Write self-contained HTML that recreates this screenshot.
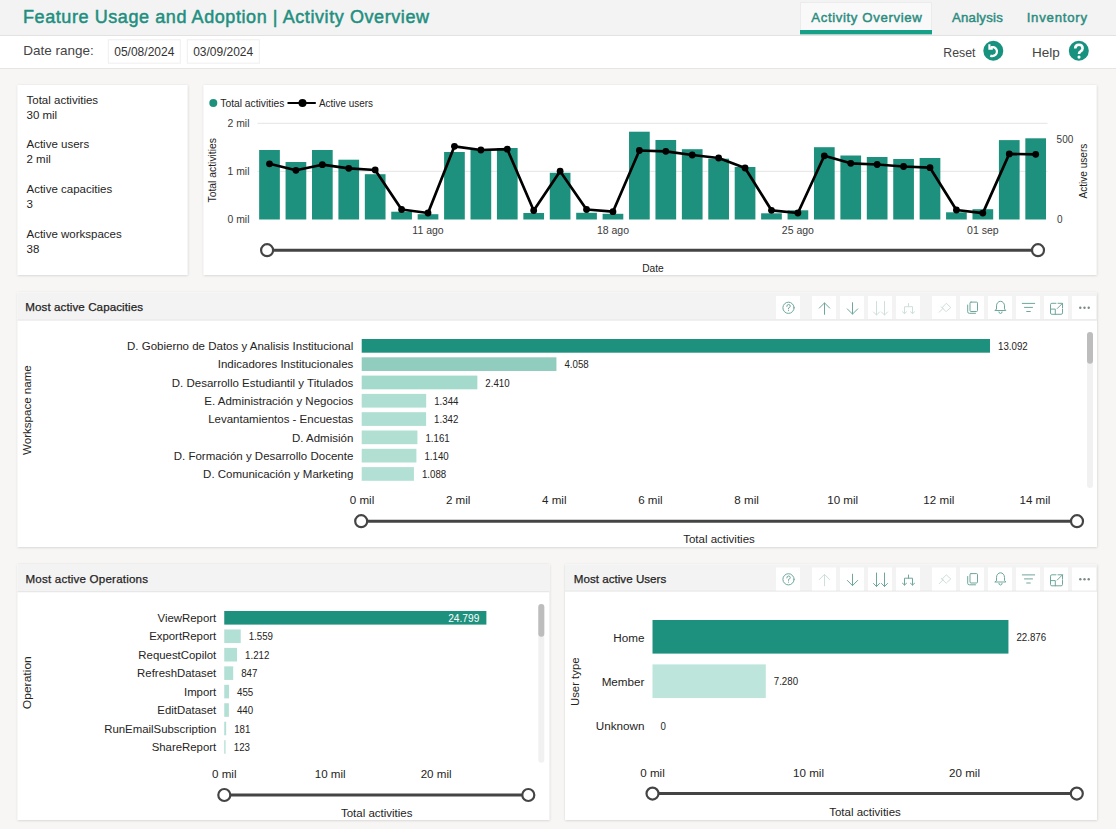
<!DOCTYPE html>
<html><head><meta charset="utf-8"><title>Feature Usage and Adoption | Activity Overview</title>
<style>
html,body{margin:0;padding:0;width:1116px;height:829px;overflow:hidden;background:#f6f5f4;}
svg{display:block;font-family:"Liberation Sans", sans-serif;}
</style></head>
<body>
<svg width="1116" height="829" viewBox="0 0 1116 829">
<defs><filter id="sh" x="-5%" y="-5%" width="110%" height="110%"><feDropShadow dx="0.3" dy="0.6" stdDeviation="1.1" flood-color="#000" flood-opacity="0.16"/></filter></defs>
<rect x="0" y="0" width="1116" height="35" fill="#f3f3f3"/>
<rect x="0" y="35" width="1116" height="1" fill="#e3e2e1"/>
<rect x="0" y="36" width="1116" height="32" fill="#ffffff"/>
<rect x="0" y="68" width="1116" height="1" fill="#e6e5e4"/>
<text x="23.00" y="22.50" font-size="18" text-anchor="start" fill="#1f8f80" stroke="#1f8f80" stroke-width="0.5" textLength="406" lengthAdjust="spacing">Feature Usage and Adoption | Activity Overview</text>
<rect x="800.5" y="2.5" width="131" height="32" fill="#f9f9f9" stroke="#ebebeb" stroke-width="1"/>
<rect x="800" y="30" width="132" height="4.3" fill="#17a089"/>
<text x="811.30" y="22.00" font-size="13.2" text-anchor="start" fill="#2b8c80" stroke="#2b8c80" stroke-width="0.45" textLength="110.4" lengthAdjust="spacing">Activity Overview</text>
<text x="952.00" y="22.00" font-size="13.2" text-anchor="start" fill="#2b8c80" stroke="#2b8c80" stroke-width="0.45" textLength="50.8" lengthAdjust="spacing">Analysis</text>
<text x="1026.70" y="22.00" font-size="13.2" text-anchor="start" fill="#2b8c80" stroke="#2b8c80" stroke-width="0.45" textLength="60.3" lengthAdjust="spacing">Inventory</text>
<text x="23.30" y="54.80" font-size="13.5" text-anchor="start" fill="#444444" font-weight="normal" >Date range:</text>
<rect x="108.3" y="39.8" width="72" height="23.4" fill="#fff" stroke="#efefef" stroke-width="1"/>
<rect x="187.3" y="39.8" width="72" height="23.4" fill="#fff" stroke="#efefef" stroke-width="1"/>
<text x="144.30" y="55.60" font-size="12" text-anchor="middle" fill="#333333" font-weight="normal" >05/08/2024</text>
<text x="223.20" y="55.60" font-size="12" text-anchor="middle" fill="#333333" font-weight="normal" >03/09/2024</text>
<text x="943.30" y="56.70" font-size="12.3" text-anchor="start" fill="#444444" font-weight="normal" >Reset</text>
<text x="1032.00" y="56.70" font-size="13.5" text-anchor="start" fill="#444444" font-weight="normal" >Help</text>
<circle cx="993.3" cy="50.8" r="10" fill="#17927f"/>
<path d="M990.5 47.2 H993.6 A4.7 4.5 0 1 1 990.3 55.6" fill="none" stroke="#fff" stroke-width="2.3"/>
<path d="M989.4 44.3 V48.6 H992.8" fill="none" stroke="#fff" stroke-width="2.1"/>
<circle cx="1078.8" cy="50.8" r="10" fill="#17927f"/>
<path d="M1075.2 48.6 Q1075.2 44.8 1078.9 44.8 Q1082.6 44.8 1082.6 48.2 Q1082.6 50.2 1080.6 51.3 Q1079 52.2 1079 54" fill="none" stroke="#fff" stroke-width="2.6"/>
<circle cx="1079" cy="57.1" r="1.55" fill="#fff"/>
<rect x="0" y="69" width="1116" height="760" fill="#f7f6f5"/>
<rect x="17.5" y="85" width="170.0" height="190" fill="#ffffff" filter="url(#sh)"/>
<rect x="203.5" y="85" width="893.0" height="190" fill="#ffffff" filter="url(#sh)"/>
<rect x="17.5" y="292.5" width="1079.5" height="254.5" fill="#ffffff" filter="url(#sh)"/>
<rect x="17.5" y="564" width="531.8" height="256" fill="#ffffff" filter="url(#sh)"/>
<rect x="565" y="564.5" width="532" height="255.5" fill="#ffffff" filter="url(#sh)"/>
<text x="26.50" y="103.70" font-size="11.5" text-anchor="start" fill="#252423" font-weight="normal" >Total activities</text>
<text x="26.50" y="118.70" font-size="11.5" text-anchor="start" fill="#252423" font-weight="normal" >30 mil</text>
<text x="26.50" y="148.30" font-size="11.5" text-anchor="start" fill="#252423" font-weight="normal" >Active users</text>
<text x="26.50" y="163.30" font-size="11.5" text-anchor="start" fill="#252423" font-weight="normal" >2 mil</text>
<text x="26.50" y="192.90" font-size="11.5" text-anchor="start" fill="#252423" font-weight="normal" >Active capacities</text>
<text x="26.50" y="207.90" font-size="11.5" text-anchor="start" fill="#252423" font-weight="normal" >3</text>
<text x="26.50" y="237.50" font-size="11.5" text-anchor="start" fill="#252423" font-weight="normal" >Active workspaces</text>
<text x="26.50" y="252.50" font-size="11.5" text-anchor="start" fill="#252423" font-weight="normal" >38</text>
<circle cx="213.3" cy="103" r="4" fill="#1e917e"/>
<text x="220.30" y="106.70" font-size="10.5" text-anchor="start" fill="#252423" font-weight="normal" textLength="64" lengthAdjust="spacingAndGlyphs">Total activities</text>
<line x1="287.5" y1="103" x2="315.8" y2="103" stroke="#000" stroke-width="2"/>
<circle cx="302.5" cy="103" r="4" fill="#000"/>
<text x="319.00" y="106.70" font-size="10.3" text-anchor="start" fill="#252423" font-weight="normal" textLength="54" lengthAdjust="spacingAndGlyphs">Active users</text>
<rect x="257.5" y="122.8" width="790" height="1" fill="#e4e4e4"/>
<rect x="257.5" y="170.8" width="790" height="1" fill="#e4e4e4"/>
<text x="249.50" y="126.70" font-size="10.4" text-anchor="end" fill="#3a3a3a" font-weight="normal" >2 mil</text>
<text x="249.50" y="174.70" font-size="10.4" text-anchor="end" fill="#3a3a3a" font-weight="normal" >1 mil</text>
<text x="249.50" y="222.70" font-size="10.4" text-anchor="end" fill="#3a3a3a" font-weight="normal" >0 mil</text>
<text x="0.00" y="0.00" font-size="10.5" text-anchor="middle" fill="#252423" font-weight="normal" textLength="64.5" lengthAdjust="spacingAndGlyphs" transform="translate(216.3,170.25) rotate(-90)">Total activities</text>
<text x="0.00" y="0.00" font-size="10.5" text-anchor="middle" fill="#252423" font-weight="normal" textLength="54.7" lengthAdjust="spacingAndGlyphs" transform="translate(1087,171.1) rotate(-90)">Active users</text>
<text x="1056.60" y="143.00" font-size="10" text-anchor="start" fill="#3a3a3a" font-weight="normal" >500</text>
<text x="1057.00" y="222.50" font-size="10" text-anchor="start" fill="#3a3a3a" font-weight="normal" >0</text>
<rect x="259.15" y="150" width="20.7" height="69.50" fill="#1e917e"/>
<rect x="285.57" y="162" width="20.7" height="57.50" fill="#1e917e"/>
<rect x="311.99" y="150" width="20.7" height="69.50" fill="#1e917e"/>
<rect x="338.41" y="159.7" width="20.7" height="59.80" fill="#1e917e"/>
<rect x="364.83" y="174.2" width="20.7" height="45.30" fill="#1e917e"/>
<rect x="391.25" y="211.7" width="20.7" height="7.80" fill="#1e917e"/>
<rect x="417.67" y="214.2" width="20.7" height="5.30" fill="#1e917e"/>
<rect x="444.09" y="152" width="20.7" height="67.50" fill="#1e917e"/>
<rect x="470.51" y="150" width="20.7" height="69.50" fill="#1e917e"/>
<rect x="496.93" y="148" width="20.7" height="71.50" fill="#1e917e"/>
<rect x="523.35" y="213" width="20.7" height="6.50" fill="#1e917e"/>
<rect x="549.77" y="172.8" width="20.7" height="46.70" fill="#1e917e"/>
<rect x="576.19" y="212.8" width="20.7" height="6.70" fill="#1e917e"/>
<rect x="602.61" y="213.8" width="20.7" height="5.70" fill="#1e917e"/>
<rect x="629.03" y="131.7" width="20.7" height="87.80" fill="#1e917e"/>
<rect x="655.45" y="140" width="20.7" height="79.50" fill="#1e917e"/>
<rect x="681.87" y="149.2" width="20.7" height="70.30" fill="#1e917e"/>
<rect x="708.29" y="158.7" width="20.7" height="60.80" fill="#1e917e"/>
<rect x="734.71" y="167" width="20.7" height="52.50" fill="#1e917e"/>
<rect x="761.13" y="213.3" width="20.7" height="6.20" fill="#1e917e"/>
<rect x="787.55" y="210.3" width="20.7" height="9.20" fill="#1e917e"/>
<rect x="813.97" y="147.2" width="20.7" height="72.30" fill="#1e917e"/>
<rect x="840.39" y="155.5" width="20.7" height="64.00" fill="#1e917e"/>
<rect x="866.81" y="157" width="20.7" height="62.50" fill="#1e917e"/>
<rect x="893.23" y="159" width="20.7" height="60.50" fill="#1e917e"/>
<rect x="919.65" y="158" width="20.7" height="61.50" fill="#1e917e"/>
<rect x="946.07" y="212.3" width="20.7" height="7.20" fill="#1e917e"/>
<rect x="972.49" y="209.2" width="20.7" height="10.30" fill="#1e917e"/>
<rect x="998.91" y="140.1" width="20.7" height="79.40" fill="#1e917e"/>
<rect x="1025.33" y="138.3" width="20.7" height="81.20" fill="#1e917e"/>
<polyline points="269.50,163.8 295.92,170.3 322.34,164.7 348.76,168.3 375.18,170 401.60,209.5 428.02,213 454.44,146.3 480.86,150 507.28,149.2 533.70,210.5 560.12,171.2 586.54,209.5 612.96,211.7 639.38,150.5 665.80,151.3 692.22,155 718.64,158 745.06,168 771.48,210.3 797.90,213 824.32,155.8 850.74,163.3 877.16,164.5 903.58,166.5 930.00,167.7 956.42,210 982.84,213.1 1009.26,153.9 1035.68,154.3" fill="none" stroke="#000" stroke-width="2.7" stroke-linejoin="round"/>
<circle cx="269.50" cy="163.8" r="3.4" fill="#000"/>
<circle cx="295.92" cy="170.3" r="3.4" fill="#000"/>
<circle cx="322.34" cy="164.7" r="3.4" fill="#000"/>
<circle cx="348.76" cy="168.3" r="3.4" fill="#000"/>
<circle cx="375.18" cy="170" r="3.4" fill="#000"/>
<circle cx="401.60" cy="209.5" r="3.4" fill="#000"/>
<circle cx="428.02" cy="213" r="3.4" fill="#000"/>
<circle cx="454.44" cy="146.3" r="3.4" fill="#000"/>
<circle cx="480.86" cy="150" r="3.4" fill="#000"/>
<circle cx="507.28" cy="149.2" r="3.4" fill="#000"/>
<circle cx="533.70" cy="210.5" r="3.4" fill="#000"/>
<circle cx="560.12" cy="171.2" r="3.4" fill="#000"/>
<circle cx="586.54" cy="209.5" r="3.4" fill="#000"/>
<circle cx="612.96" cy="211.7" r="3.4" fill="#000"/>
<circle cx="639.38" cy="150.5" r="3.4" fill="#000"/>
<circle cx="665.80" cy="151.3" r="3.4" fill="#000"/>
<circle cx="692.22" cy="155" r="3.4" fill="#000"/>
<circle cx="718.64" cy="158" r="3.4" fill="#000"/>
<circle cx="745.06" cy="168" r="3.4" fill="#000"/>
<circle cx="771.48" cy="210.3" r="3.4" fill="#000"/>
<circle cx="797.90" cy="213" r="3.4" fill="#000"/>
<circle cx="824.32" cy="155.8" r="3.4" fill="#000"/>
<circle cx="850.74" cy="163.3" r="3.4" fill="#000"/>
<circle cx="877.16" cy="164.5" r="3.4" fill="#000"/>
<circle cx="903.58" cy="166.5" r="3.4" fill="#000"/>
<circle cx="930.00" cy="167.7" r="3.4" fill="#000"/>
<circle cx="956.42" cy="210" r="3.4" fill="#000"/>
<circle cx="982.84" cy="213.1" r="3.4" fill="#000"/>
<circle cx="1009.26" cy="153.9" r="3.4" fill="#000"/>
<circle cx="1035.68" cy="154.3" r="3.4" fill="#000"/>
<text x="428.02" y="233.70" font-size="10.5" text-anchor="middle" fill="#3a3a3a" font-weight="normal" >11 ago</text>
<text x="612.96" y="233.70" font-size="10.5" text-anchor="middle" fill="#3a3a3a" font-weight="normal" >18 ago</text>
<text x="797.90" y="233.70" font-size="10.5" text-anchor="middle" fill="#3a3a3a" font-weight="normal" >25 ago</text>
<text x="982.84" y="233.70" font-size="10.5" text-anchor="middle" fill="#3a3a3a" font-weight="normal" >01 sep</text>
<line x1="267.1" y1="250.2" x2="1038" y2="250.2" stroke="#444" stroke-width="3"/>
<circle cx="267.1" cy="250.2" r="6" fill="#fff" stroke="#444" stroke-width="2.2"/>
<circle cx="1038" cy="250.2" r="6" fill="#fff" stroke="#444" stroke-width="2.2"/>
<text x="653.00" y="271.80" font-size="10.2" text-anchor="middle" fill="#252423" font-weight="normal" >Date</text>
<rect x="17.5" y="292.5" width="1079.5" height="27.0" fill="#f3f3f3"/>
<rect x="17.5" y="319.5" width="1079.5" height="1" fill="#e1e1e1"/>
<text x="25.30" y="310.80" font-size="11.6" text-anchor="start" fill="#252423" stroke="#252423" stroke-width="0.25" textLength="117.7" lengthAdjust="spacing">Most active Capacities</text>
<rect x="17.5" y="564" width="531.8" height="27.200000000000045" fill="#f3f3f3"/>
<rect x="17.5" y="591.2" width="531.8" height="1" fill="#e1e1e1"/>
<text x="25.50" y="583.20" font-size="11.6" text-anchor="start" fill="#252423" stroke="#252423" stroke-width="0.25" textLength="122.5" lengthAdjust="spacing">Most active Operations</text>
<rect x="565" y="564.5" width="532" height="26.0" fill="#f3f3f3"/>
<rect x="565" y="590.5" width="532" height="1" fill="#e1e1e1"/>
<text x="573.75" y="583.00" font-size="11.6" text-anchor="start" fill="#252423" stroke="#252423" stroke-width="0.25" textLength="92.5" lengthAdjust="spacing">Most active Users</text>
<rect x="776" y="296" width="24" height="23" fill="#ffffff"/>
<circle cx="788.5" cy="307.8" r="5.6" fill="none" stroke="#6ea79b" stroke-width="1" stroke-linecap="round" stroke-linejoin="round"/>
<path d="M786.8 306.4 Q786.8 304.5 788.5 304.5 Q790.3 304.5 790.3 306.2 Q790.3 307.3 788.5 308 V308.9" fill="none" stroke="#6ea79b" stroke-width="1" stroke-linecap="round" stroke-linejoin="round"/>
<circle cx="788.5" cy="310.6" r="0.6" fill="#6ea79b"/>
<rect x="812" y="296" width="24" height="23" fill="#ffffff"/>
<path d="M824.5 314.3 V302.9 M819.3 308.1 L824.5 302.9 L829.7 308.1" fill="none" stroke="#6ea79b" stroke-width="1" stroke-linecap="round" stroke-linejoin="round"/>
<rect x="840" y="296" width="24" height="23" fill="#ffffff"/>
<path d="M852.5 302.7 V314.1 M847.3 308.9 L852.5 314.1 L857.7 308.9" fill="none" stroke="#6ea79b" stroke-width="1" stroke-linecap="round" stroke-linejoin="round"/>
<rect x="868" y="296" width="24" height="23" fill="#ffffff"/>
<path d="M876.5 301.5 V315.0 M873.5 312.0 L876.5 315.0 L879.5 312.0" fill="none" stroke="#cde0db" stroke-width="1" stroke-linecap="round" stroke-linejoin="round"/>
<path d="M884.5 301.5 V315.0 M881.5 312.0 L884.5 315.0 L887.5 312.0" fill="none" stroke="#cde0db" stroke-width="1" stroke-linecap="round" stroke-linejoin="round"/>
<rect x="896" y="296" width="24" height="23" fill="#ffffff"/>
<path d="M908.5 303.5 V306.7 M904.5 313.5 V306.7 H912.5 V313.5 M902.5 311.8 L904.5 313.5 L906.5 311.8 M910.5 311.8 L912.5 313.5 L914.5 311.8" fill="none" stroke="#cde0db" stroke-width="1" stroke-linecap="round" stroke-linejoin="round"/>
<rect x="932" y="296" width="24" height="23" fill="#ffffff"/>
<path d="M939.2 312.2 L943.0 308.4 M941.3 306.9 L946.1 311.7 M942.1 307.7 L946.3 303.3 L950.8 307.5 L946.9 310.9" fill="none" stroke="#cde0db" stroke-width="1" stroke-linecap="round" stroke-linejoin="round"/>
<rect x="960" y="296" width="24" height="23" fill="#ffffff"/>
<rect x="970.0" y="302.1" width="7.5" height="9.4" rx="1" fill="none" stroke="#6ea79b" stroke-width="1" stroke-linecap="round" stroke-linejoin="round"/>
<path d="M967.7 305.0 V311.8 Q967.7 313.3 969.3 313.3 H975.5" fill="none" stroke="#6ea79b" stroke-width="1" stroke-linecap="round" stroke-linejoin="round"/>
<rect x="988" y="296" width="24" height="23" fill="#ffffff"/>
<path d="M995.2 310.5 H1005.8 L1004.5 308.9 V305.9 A4 4.6 0 0 0 996.5 305.9 V308.9 Z M998.9 311.9 A1.6 1.6 0 0 0 1002.1 311.9" fill="none" stroke="#6ea79b" stroke-width="1" stroke-linecap="round" stroke-linejoin="round"/>
<rect x="1016" y="296" width="24" height="23" fill="#ffffff"/>
<path d="M1022.3 303.4 H1034.7 M1024.5 307.4 H1032.5 M1026.7 311.5 H1030.3" fill="none" stroke="#6ea79b" stroke-width="1" stroke-linecap="round" stroke-linejoin="round" stroke-width="1.1"/>
<rect x="1044" y="296" width="24" height="23" fill="#ffffff"/>
<path d="M1056.0 303.3 H1051.9 Q1050.5 303.3 1050.5 304.7 V313.1 Q1050.5 314.3 1051.9 314.3 H1061.1 Q1062.5 314.3 1062.5 312.9 V309.0 M1058.0 303.3 H1062.5 V307.7 M1062.5 303.3 L1057.3 308.5 M1050.5 309.1 H1055.3 V314.3" fill="none" stroke="#6ea79b" stroke-width="1" stroke-linecap="round" stroke-linejoin="round"/>
<rect x="1072" y="296" width="24" height="23" fill="#ffffff"/>
<circle cx="1080.3" cy="307.8" r="1.2" fill="#7a8a86"/>
<circle cx="1084.5" cy="307.8" r="1.2" fill="#7a8a86"/>
<circle cx="1088.7" cy="307.8" r="1.2" fill="#7a8a86"/>
<rect x="776" y="567.5" width="24" height="23" fill="#ffffff"/>
<circle cx="788.5" cy="579.3" r="5.6" fill="none" stroke="#6ea79b" stroke-width="1" stroke-linecap="round" stroke-linejoin="round"/>
<path d="M786.8 577.9 Q786.8 576.0 788.5 576.0 Q790.3 576.0 790.3 577.7 Q790.3 578.8 788.5 579.5 V580.4" fill="none" stroke="#6ea79b" stroke-width="1" stroke-linecap="round" stroke-linejoin="round"/>
<circle cx="788.5" cy="582.1" r="0.6" fill="#6ea79b"/>
<rect x="812" y="567.5" width="24" height="23" fill="#ffffff"/>
<path d="M824.5 585.8 V574.4 M819.3 579.6 L824.5 574.4 L829.7 579.6" fill="none" stroke="#cde0db" stroke-width="1" stroke-linecap="round" stroke-linejoin="round"/>
<rect x="840" y="567.5" width="24" height="23" fill="#ffffff"/>
<path d="M852.5 574.2 V585.6 M847.3 580.4 L852.5 585.6 L857.7 580.4" fill="none" stroke="#6ea79b" stroke-width="1" stroke-linecap="round" stroke-linejoin="round"/>
<rect x="868" y="567.5" width="24" height="23" fill="#ffffff"/>
<path d="M876.5 573.0 V586.5 M873.5 583.5 L876.5 586.5 L879.5 583.5" fill="none" stroke="#6ea79b" stroke-width="1" stroke-linecap="round" stroke-linejoin="round"/>
<path d="M884.5 573.0 V586.5 M881.5 583.5 L884.5 586.5 L887.5 583.5" fill="none" stroke="#6ea79b" stroke-width="1" stroke-linecap="round" stroke-linejoin="round"/>
<rect x="896" y="567.5" width="24" height="23" fill="#ffffff"/>
<path d="M908.5 575.0 V578.2 M904.5 585.0 V578.2 H912.5 V585.0 M902.5 583.3 L904.5 585.0 L906.5 583.3 M910.5 583.3 L912.5 585.0 L914.5 583.3" fill="none" stroke="#6ea79b" stroke-width="1" stroke-linecap="round" stroke-linejoin="round"/>
<rect x="932" y="567.5" width="24" height="23" fill="#ffffff"/>
<path d="M939.2 583.7 L943.0 579.9 M941.3 578.4 L946.1 583.2 M942.1 579.2 L946.3 574.8 L950.8 579.0 L946.9 582.4" fill="none" stroke="#cde0db" stroke-width="1" stroke-linecap="round" stroke-linejoin="round"/>
<rect x="960" y="567.5" width="24" height="23" fill="#ffffff"/>
<rect x="970.0" y="573.6" width="7.5" height="9.4" rx="1" fill="none" stroke="#6ea79b" stroke-width="1" stroke-linecap="round" stroke-linejoin="round"/>
<path d="M967.7 576.5 V583.3 Q967.7 584.8 969.3 584.8 H975.5" fill="none" stroke="#6ea79b" stroke-width="1" stroke-linecap="round" stroke-linejoin="round"/>
<rect x="988" y="567.5" width="24" height="23" fill="#ffffff"/>
<path d="M995.2 582.0 H1005.8 L1004.5 580.4 V577.4 A4 4.6 0 0 0 996.5 577.4 V580.4 Z M998.9 583.4 A1.6 1.6 0 0 0 1002.1 583.4" fill="none" stroke="#6ea79b" stroke-width="1" stroke-linecap="round" stroke-linejoin="round"/>
<rect x="1016" y="567.5" width="24" height="23" fill="#ffffff"/>
<path d="M1022.3 574.9 H1034.7 M1024.5 578.9 H1032.5 M1026.7 583.0 H1030.3" fill="none" stroke="#6ea79b" stroke-width="1" stroke-linecap="round" stroke-linejoin="round" stroke-width="1.1"/>
<rect x="1044" y="567.5" width="24" height="23" fill="#ffffff"/>
<path d="M1056.0 574.8 H1051.9 Q1050.5 574.8 1050.5 576.2 V584.6 Q1050.5 585.8 1051.9 585.8 H1061.1 Q1062.5 585.8 1062.5 584.4 V580.5 M1058.0 574.8 H1062.5 V579.2 M1062.5 574.8 L1057.3 580.0 M1050.5 580.6 H1055.3 V585.8" fill="none" stroke="#6ea79b" stroke-width="1" stroke-linecap="round" stroke-linejoin="round"/>
<rect x="1072" y="567.5" width="24" height="23" fill="#ffffff"/>
<circle cx="1080.3" cy="579.3" r="1.2" fill="#7a8a86"/>
<circle cx="1084.5" cy="579.3" r="1.2" fill="#7a8a86"/>
<circle cx="1088.7" cy="579.3" r="1.2" fill="#7a8a86"/>
<rect x="361.7" y="339.00" width="628.29" height="13.7" fill="#1e917e"/>
<text x="353.30" y="350.00" font-size="11.5" text-anchor="end" fill="#252423" font-weight="normal" >D. Gobierno de Datos y Analisis Institucional</text>
<text x="997.99" y="350.00" font-size="11.3" text-anchor="start" fill="#252423" textLength="29.72" lengthAdjust="spacingAndGlyphs">13.092</text>
<rect x="361.7" y="357.30" width="194.74" height="13.7" fill="#91cdbe"/>
<text x="353.30" y="368.30" font-size="11.5" text-anchor="end" fill="#252423" font-weight="normal" >Indicadores Institucionales</text>
<text x="564.44" y="368.30" font-size="11.3" text-anchor="start" fill="#252423" textLength="24.31" lengthAdjust="spacingAndGlyphs">4.058</text>
<rect x="361.7" y="375.60" width="115.66" height="13.7" fill="#a3dacb"/>
<text x="353.30" y="386.60" font-size="11.5" text-anchor="end" fill="#252423" font-weight="normal" >D. Desarrollo Estudiantil y Titulados</text>
<text x="485.36" y="386.60" font-size="11.3" text-anchor="start" fill="#252423" textLength="24.31" lengthAdjust="spacingAndGlyphs">2.410</text>
<rect x="361.7" y="393.90" width="64.50" height="13.7" fill="#afdfd2"/>
<text x="353.30" y="404.90" font-size="11.5" text-anchor="end" fill="#252423" font-weight="normal" >E. Administración y Negocios</text>
<text x="434.20" y="404.90" font-size="11.3" text-anchor="start" fill="#252423" textLength="24.31" lengthAdjust="spacingAndGlyphs">1.344</text>
<rect x="361.7" y="412.20" width="64.40" height="13.7" fill="#afdfd2"/>
<text x="353.30" y="423.20" font-size="11.5" text-anchor="end" fill="#252423" font-weight="normal" >Levantamientos - Encuestas</text>
<text x="434.10" y="423.20" font-size="11.3" text-anchor="start" fill="#252423" textLength="24.31" lengthAdjust="spacingAndGlyphs">1.342</text>
<rect x="361.7" y="430.50" width="55.72" height="13.7" fill="#b1e0d3"/>
<text x="353.30" y="441.50" font-size="11.5" text-anchor="end" fill="#252423" font-weight="normal" >D. Admisión</text>
<text x="425.42" y="441.50" font-size="11.3" text-anchor="start" fill="#252423" textLength="24.31" lengthAdjust="spacingAndGlyphs">1.161</text>
<rect x="361.7" y="448.80" width="54.71" height="13.7" fill="#b1e0d3"/>
<text x="353.30" y="459.80" font-size="11.5" text-anchor="end" fill="#252423" font-weight="normal" >D. Formación y Desarrollo Docente</text>
<text x="424.41" y="459.80" font-size="11.3" text-anchor="start" fill="#252423" textLength="24.31" lengthAdjust="spacingAndGlyphs">1.140</text>
<rect x="361.7" y="467.10" width="52.21" height="13.7" fill="#b2e0d4"/>
<text x="353.30" y="478.10" font-size="11.5" text-anchor="end" fill="#252423" font-weight="normal" >D. Comunicación y Marketing</text>
<text x="421.91" y="478.10" font-size="11.3" text-anchor="start" fill="#252423" textLength="24.31" lengthAdjust="spacingAndGlyphs">1.088</text>
<text x="362.00" y="503.70" font-size="11.6" text-anchor="middle" fill="#252423" font-weight="normal" >0 mil</text>
<text x="458.14" y="503.70" font-size="11.6" text-anchor="middle" fill="#252423" font-weight="normal" >2 mil</text>
<text x="554.28" y="503.70" font-size="11.6" text-anchor="middle" fill="#252423" font-weight="normal" >4 mil</text>
<text x="650.42" y="503.70" font-size="11.6" text-anchor="middle" fill="#252423" font-weight="normal" >6 mil</text>
<text x="746.56" y="503.70" font-size="11.6" text-anchor="middle" fill="#252423" font-weight="normal" >8 mil</text>
<text x="842.70" y="503.70" font-size="11.6" text-anchor="middle" fill="#252423" font-weight="normal" >10 mil</text>
<text x="938.84" y="503.70" font-size="11.6" text-anchor="middle" fill="#252423" font-weight="normal" >12 mil</text>
<text x="1034.98" y="503.70" font-size="11.6" text-anchor="middle" fill="#252423" font-weight="normal" >14 mil</text>
<line x1="361.2" y1="521.2" x2="1077" y2="521.2" stroke="#444" stroke-width="3"/>
<circle cx="361.2" cy="521.2" r="6" fill="#fff" stroke="#444" stroke-width="2.2"/>
<circle cx="1077" cy="521.2" r="6" fill="#fff" stroke="#444" stroke-width="2.2"/>
<text x="719.00" y="543.00" font-size="11.5" text-anchor="middle" fill="#252423" font-weight="normal" >Total activities</text>
<text x="0.00" y="0.00" font-size="11.5" text-anchor="middle" fill="#252423" font-weight="normal" textLength="89.7" lengthAdjust="spacingAndGlyphs" transform="translate(31.3,410.1) rotate(-90)">Workspace name</text>
<rect x="1087" y="332" width="6" height="156" rx="3" fill="#f1f1f1"/>
<rect x="1087" y="332" width="6" height="31.69999999999999" rx="3" fill="#bdbdbd"/>
<rect x="224.25" y="611.00" width="262.13" height="13.6" fill="#1e917e"/>
<text x="216.25" y="622.00" font-size="11.4" text-anchor="end" fill="#252423" font-weight="normal" >ViewReport</text>
<text x="479.30" y="622.00" font-size="11.3" text-anchor="end" fill="#ffffff" textLength="31.10" lengthAdjust="spacingAndGlyphs">24.799</text>
<rect x="224.25" y="629.45" width="16.48" height="13.6" fill="#b3e0d5"/>
<text x="216.25" y="640.45" font-size="11.4" text-anchor="end" fill="#252423" font-weight="normal" >ExportReport</text>
<text x="248.73" y="640.45" font-size="11.3" text-anchor="start" fill="#252423" textLength="24.31" lengthAdjust="spacingAndGlyphs">1.559</text>
<rect x="224.25" y="647.90" width="12.81" height="13.6" fill="#b3e0d5"/>
<text x="216.25" y="658.90" font-size="11.4" text-anchor="end" fill="#252423" font-weight="normal" >RequestCopilot</text>
<text x="245.06" y="658.90" font-size="11.3" text-anchor="start" fill="#252423" textLength="24.31" lengthAdjust="spacingAndGlyphs">1.212</text>
<rect x="224.25" y="666.35" width="8.95" height="13.6" fill="#b3e0d5"/>
<text x="216.25" y="677.35" font-size="11.4" text-anchor="end" fill="#252423" font-weight="normal" >RefreshDataset</text>
<text x="241.20" y="677.35" font-size="11.3" text-anchor="start" fill="#252423" textLength="16.21" lengthAdjust="spacingAndGlyphs">847</text>
<rect x="224.25" y="684.80" width="4.81" height="13.6" fill="#b3e0d5"/>
<text x="216.25" y="695.80" font-size="11.4" text-anchor="end" fill="#252423" font-weight="normal" >Import</text>
<text x="237.06" y="695.80" font-size="11.3" text-anchor="start" fill="#252423" textLength="16.21" lengthAdjust="spacingAndGlyphs">455</text>
<rect x="224.25" y="703.25" width="4.65" height="13.6" fill="#b3e0d5"/>
<text x="216.25" y="714.25" font-size="11.4" text-anchor="end" fill="#252423" font-weight="normal" >EditDataset</text>
<text x="236.90" y="714.25" font-size="11.3" text-anchor="start" fill="#252423" textLength="16.21" lengthAdjust="spacingAndGlyphs">440</text>
<rect x="224.25" y="721.70" width="1.91" height="13.6" fill="#b3e0d5"/>
<text x="216.25" y="732.70" font-size="11.4" text-anchor="end" fill="#252423" font-weight="normal" >RunEmailSubscription</text>
<text x="234.16" y="732.70" font-size="11.3" text-anchor="start" fill="#252423" textLength="16.21" lengthAdjust="spacingAndGlyphs">181</text>
<rect x="224.25" y="740.15" width="1.30" height="13.6" fill="#b3e0d5"/>
<text x="216.25" y="751.15" font-size="11.4" text-anchor="end" fill="#252423" font-weight="normal" >ShareReport</text>
<text x="233.75" y="751.15" font-size="11.3" text-anchor="start" fill="#252423" textLength="16.21" lengthAdjust="spacingAndGlyphs">123</text>
<text x="224.30" y="778.30" font-size="11.6" text-anchor="middle" fill="#252423" font-weight="normal" >0 mil</text>
<text x="330.20" y="778.30" font-size="11.6" text-anchor="middle" fill="#252423" font-weight="normal" >10 mil</text>
<text x="436.10" y="778.30" font-size="11.6" text-anchor="middle" fill="#252423" font-weight="normal" >20 mil</text>
<line x1="224.3" y1="795" x2="528.3" y2="795" stroke="#444" stroke-width="3"/>
<circle cx="224.3" cy="795" r="6" fill="#fff" stroke="#444" stroke-width="2.2"/>
<circle cx="528.3" cy="795" r="6" fill="#fff" stroke="#444" stroke-width="2.2"/>
<text x="376.70" y="816.70" font-size="11.5" text-anchor="middle" fill="#252423" font-weight="normal" >Total activities</text>
<text x="0.00" y="0.00" font-size="11.5" text-anchor="middle" fill="#252423" font-weight="normal" textLength="53" lengthAdjust="spacingAndGlyphs" transform="translate(31.3,682.7) rotate(-90)">Operation</text>
<rect x="538.3" y="604" width="6" height="158.70000000000005" rx="3" fill="#f1f1f1"/>
<rect x="538.3" y="604" width="6" height="32.700000000000045" rx="3" fill="#bdbdbd"/>
<rect x="652.5" y="620.00" width="355.95" height="33.6" fill="#1e917e"/>
<text x="644.50" y="641.50" font-size="11.7" text-anchor="end" fill="#252423" font-weight="normal" >Home</text>
<text x="1016.45" y="641.00" font-size="11.3" text-anchor="start" fill="#252423" textLength="29.72" lengthAdjust="spacingAndGlyphs">22.876</text>
<rect x="652.5" y="664.40" width="113.28" height="33.6" fill="#bde5db"/>
<text x="644.50" y="685.90" font-size="11.7" text-anchor="end" fill="#252423" font-weight="normal" >Member</text>
<text x="773.78" y="685.40" font-size="11.3" text-anchor="start" fill="#252423" textLength="24.31" lengthAdjust="spacingAndGlyphs">7.280</text>
<text x="644.50" y="730.30" font-size="11.7" text-anchor="end" fill="#252423" font-weight="normal" >Unknown</text>
<text x="660.50" y="729.80" font-size="11.3" text-anchor="start" fill="#252423" textLength="5.40" lengthAdjust="spacingAndGlyphs">0</text>
<text x="652.50" y="777.30" font-size="11.6" text-anchor="middle" fill="#252423" font-weight="normal" >0 mil</text>
<text x="808.50" y="777.30" font-size="11.6" text-anchor="middle" fill="#252423" font-weight="normal" >10 mil</text>
<text x="964.50" y="777.30" font-size="11.6" text-anchor="middle" fill="#252423" font-weight="normal" >20 mil</text>
<line x1="652.5" y1="793.6" x2="1076.8" y2="793.6" stroke="#444" stroke-width="3"/>
<circle cx="652.5" cy="793.6" r="6" fill="#fff" stroke="#444" stroke-width="2.2"/>
<circle cx="1076.8" cy="793.6" r="6" fill="#fff" stroke="#444" stroke-width="2.2"/>
<text x="865.00" y="815.70" font-size="11.5" text-anchor="middle" fill="#252423" font-weight="normal" >Total activities</text>
<text x="0.00" y="0.00" font-size="11.5" text-anchor="middle" fill="#252423" font-weight="normal" textLength="48.5" lengthAdjust="spacingAndGlyphs" transform="translate(579.3,681.75) rotate(-90)">User type</text>
</svg>
</body></html>
